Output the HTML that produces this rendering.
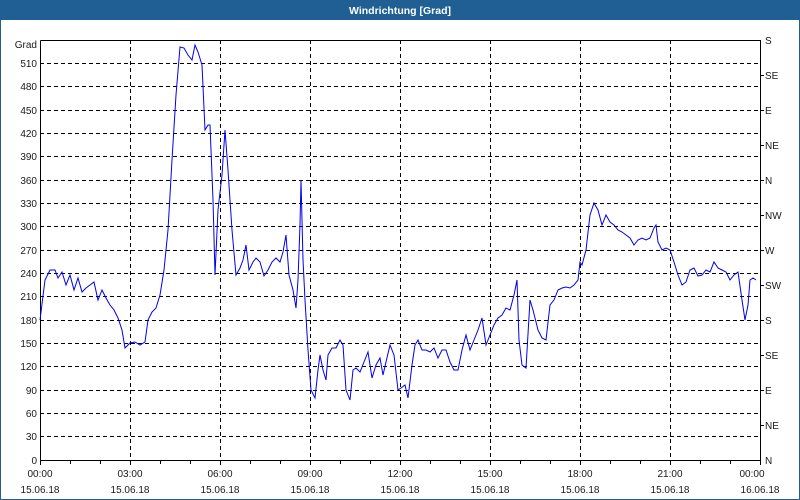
<!DOCTYPE html>
<html><head><meta charset="utf-8"><style>
html,body{margin:0;padding:0;background:#fff;width:800px;height:500px;overflow:hidden}
svg text{font-family:"Liberation Sans",sans-serif;font-size:10px;fill:#1a1a1a}
</style></head><body>
<svg width="800" height="500" xmlns="http://www.w3.org/2000/svg">
<rect x="0" y="0" width="800" height="500" fill="#fff"/>
<rect x="0.5" y="0.5" width="799" height="499" fill="none" stroke="#1f5f94"/>
<rect x="0" y="0" width="800" height="20" fill="#1f5f94"/>
<text x="400" y="14" text-anchor="middle" style="fill:#fff;font-weight:bold;font-size:10.5px">Windrichtung [Grad]</text>
<g stroke="#000" stroke-dasharray="4,3" stroke-width="1">
<line x1="40" x2="760" y1="63.5" y2="63.5"/><line x1="40" x2="760" y1="86.5" y2="86.5"/><line x1="40" x2="760" y1="110.5" y2="110.5"/><line x1="40" x2="760" y1="133.5" y2="133.5"/><line x1="40" x2="760" y1="156.5" y2="156.5"/><line x1="40" x2="760" y1="180.5" y2="180.5"/><line x1="40" x2="760" y1="203.5" y2="203.5"/><line x1="40" x2="760" y1="226.5" y2="226.5"/><line x1="40" x2="760" y1="250.5" y2="250.5"/><line x1="40" x2="760" y1="273.5" y2="273.5"/><line x1="40" x2="760" y1="296.5" y2="296.5"/><line x1="40" x2="760" y1="320.5" y2="320.5"/><line x1="40" x2="760" y1="343.5" y2="343.5"/><line x1="40" x2="760" y1="366.5" y2="366.5"/><line x1="40" x2="760" y1="390.5" y2="390.5"/><line x1="40" x2="760" y1="413.5" y2="413.5"/><line x1="40" x2="760" y1="436.5" y2="436.5"/>
<line x1="130.5" x2="130.5" y1="40" y2="460"/><line x1="220.5" x2="220.5" y1="40" y2="460"/><line x1="310.5" x2="310.5" y1="40" y2="460"/><line x1="400.5" x2="400.5" y1="40" y2="460"/><line x1="490.5" x2="490.5" y1="40" y2="460"/><line x1="580.5" x2="580.5" y1="40" y2="460"/><line x1="670.5" x2="670.5" y1="40" y2="460"/>
</g>
<g stroke="#000" stroke-width="1" fill="none">
<polyline points="40.5,40.5 760.5,40.5 760.5,460.5 40.5,460.5 40.5,40.5"/>
<path d="M40.5 460v5M70.5 460v4M100.5 460v4M130.5 460v5M160.5 460v4M190.5 460v4M220.5 460v5M250.5 460v4M280.5 460v4M310.5 460v5M340.5 460v4M370.5 460v4M400.5 460v5M430.5 460v4M460.5 460v4M490.5 460v5M520.5 460v4M550.5 460v4M580.5 460v5M610.5 460v4M640.5 460v4M670.5 460v5M700.5 460v4M730.5 460v4M760.5 460v5"/>
<path d="M760 75.5h4M760 110.5h4M760 145.5h4M760 180.5h4M760 215.5h4M760 250.5h4M760 285.5h4M760 320.5h4M760 355.5h4M760 390.5h4M760 425.5h4"/>
</g>
<g text-anchor="end">
<text x="37" y="48">Grad</text>
<text x="37" y="67">510</text><text x="37" y="90">480</text><text x="37" y="114">450</text><text x="37" y="137">420</text><text x="37" y="160">390</text><text x="37" y="184">360</text><text x="37" y="207">330</text><text x="37" y="230">300</text><text x="37" y="254">270</text><text x="37" y="277">240</text><text x="37" y="300">210</text><text x="37" y="324">180</text><text x="37" y="347">150</text><text x="37" y="370">120</text><text x="37" y="394">90</text><text x="37" y="417">60</text><text x="37" y="440">30</text><text x="37" y="464">0</text>
</g>
<g>
<text x="765" y="44">S</text><text x="765" y="79">SE</text><text x="765" y="114">E</text><text x="765" y="149">NE</text><text x="765" y="184">N</text><text x="765" y="219">NW</text><text x="765" y="254">W</text><text x="765" y="289">SW</text><text x="765" y="324">S</text><text x="765" y="359">SE</text><text x="765" y="394">E</text><text x="765" y="429">NE</text><text x="765" y="464">N</text>
</g>
<g text-anchor="middle">
<text x="40" y="477">00:00</text><text x="130" y="477">03:00</text><text x="220" y="477">06:00</text><text x="310" y="477">09:00</text><text x="400" y="477">12:00</text><text x="490" y="477">15:00</text><text x="580" y="477">18:00</text><text x="670" y="477">21:00</text><text x="752" y="477">00:00</text>
<text x="40" y="493">15.06.18</text><text x="130" y="493">15.06.18</text><text x="220" y="493">15.06.18</text><text x="310" y="493">15.06.18</text><text x="400" y="493">15.06.18</text><text x="490" y="493">15.06.18</text><text x="580" y="493">15.06.18</text><text x="670" y="493">15.06.18</text><text x="760" y="493">16.06.18</text>
</g>
<polyline fill="none" stroke="#0000ee" stroke-width="1" points="40,320 45,280 50,270 55,270 58,278 62,272 66,285 70,275 74,290 78,278 82,292 86,288 90,285 94,282 98,300 102,290 106,298 110,305 114,310 118,318 122,330 125,348 130,343 135,342 140,345 145,342 148,320 152,312 156,308 160,295 164,270 168,230 172,160 176,95 180,47 184,48 188,55 192,60 195,45 198,52 202,65 205,130 208,125 210,125 213,200 215,275 218,210 222,175 225,130 228,170 232,230 236,275 240,268 243,260 246,245 249,270 253,262 256,258 260,262 264,276 268,270 272,262 276,258 280,262 283,252 286,235 289,275 293,290 296,308 298,280 300,225 301,180 303,260 305,300 308,350 311,390 315,398 318,370 320,355 323,370 326,380 328,355 332,348 336,348 340,340 343,345 346,390 350,400 353,370 356,368 360,372 364,362 368,352 372,378 376,365 380,358 383,375 386,362 390,345 394,355 398,390 401,388 405,385 408,398 412,365 415,345 418,340 422,350 426,350 430,352 434,348 438,358 442,350 446,350 450,362 454,370 458,370 462,350 466,335 470,350 474,340 478,330 482,318 486,345 490,335 494,325 498,318 502,315 506,308 510,310 514,295 517,280 519,340 522,365 526,368 530,300 533,310 538,330 542,338 546,340 550,305 554,300 558,290 562,288 566,287 570,288 574,285 578,280 580,262 582,265 586,250 590,215 594,203 598,210 602,225 606,215 610,222 614,225 618,230 622,232 626,235 630,238 634,245 638,240 642,238 646,240 650,238 654,228 656,225 658,242 662,250 666,248 670,250 674,262 678,275 682,285 686,282 690,270 694,268 698,276 702,275 706,270 710,272 714,262 718,268 722,270 726,272 730,280 734,275 738,272 742,300 745,320 748,305 750,280 753,278 756,280"/>
</svg>
</body></html>
